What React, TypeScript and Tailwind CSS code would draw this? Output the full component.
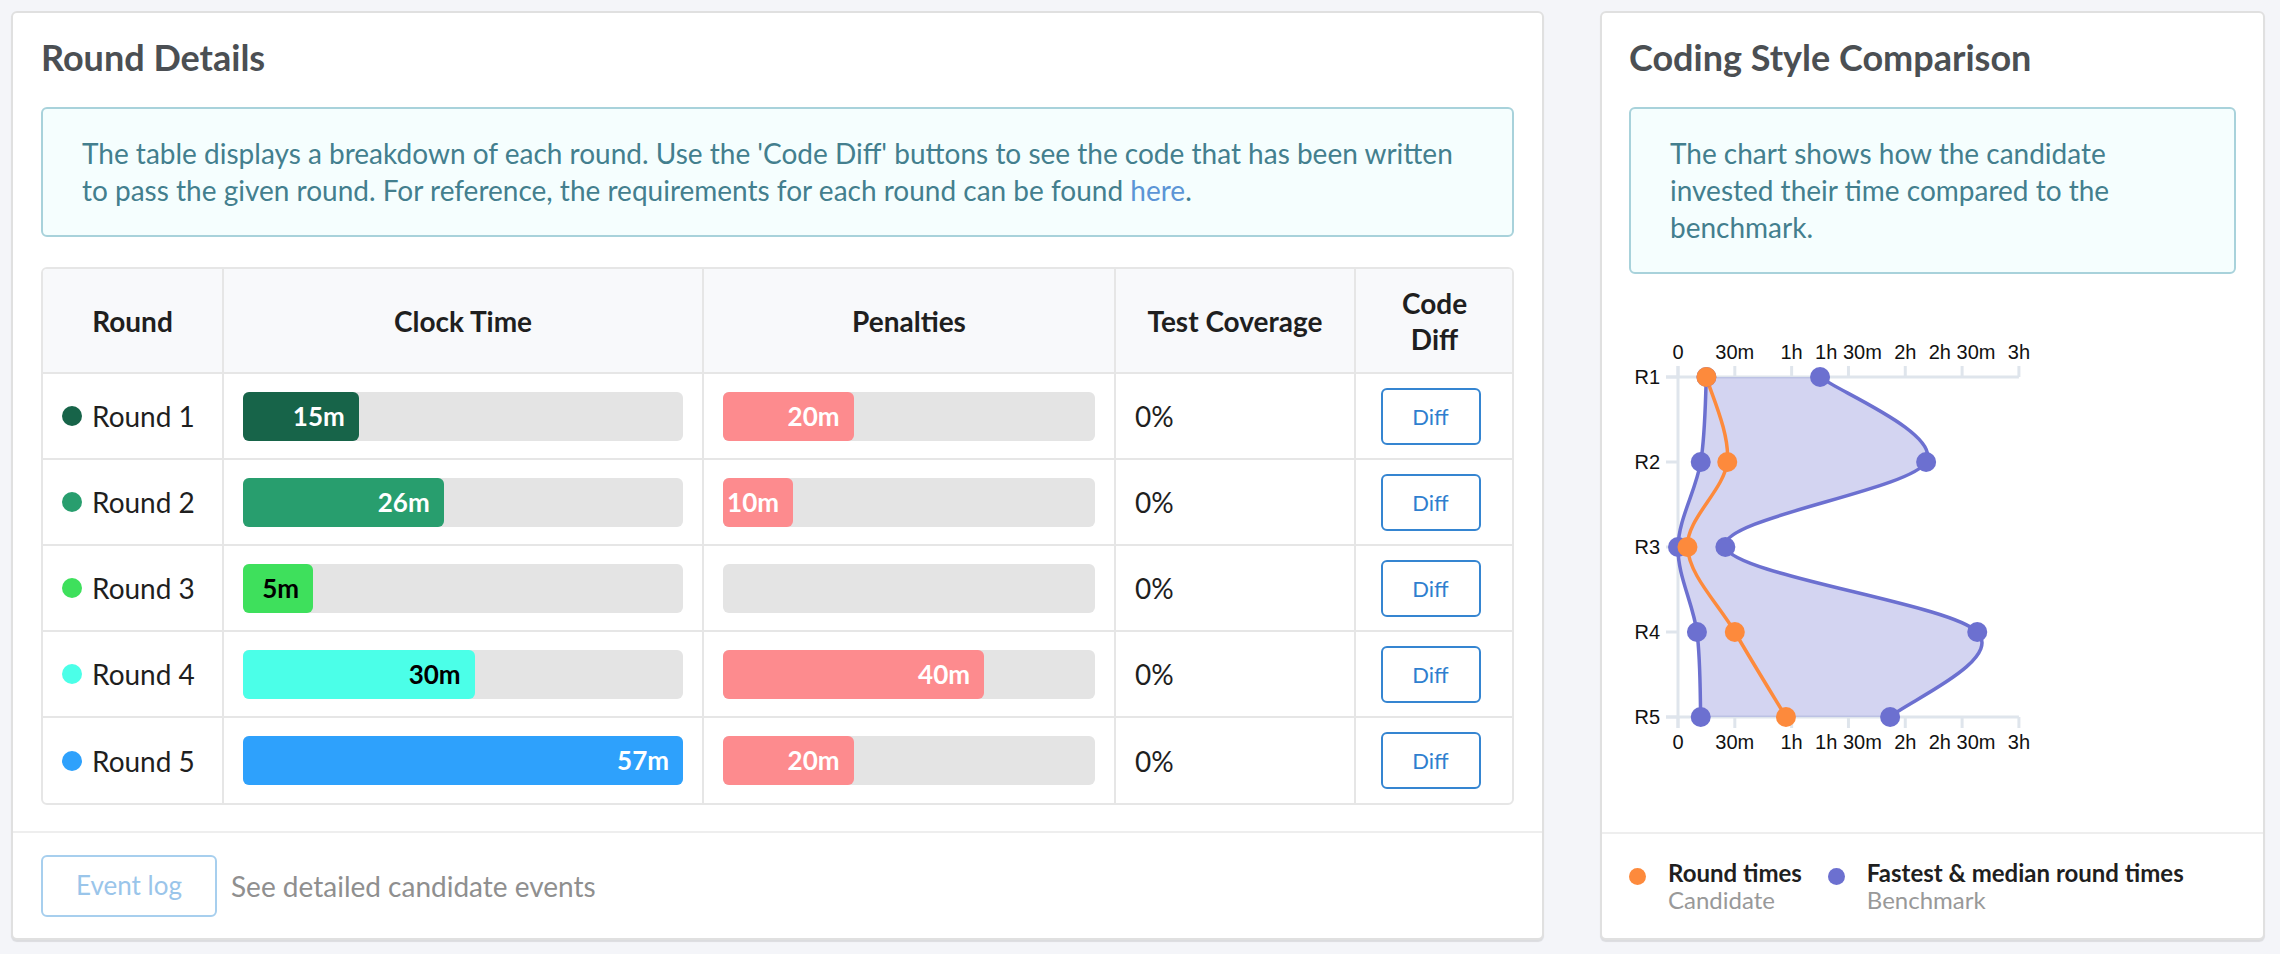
import React from "react";

const rounds = [
  { name: "Round 1", dot: "bg-[#176449]", fill: "bg-[#176449]", text: "text-white", clock: 15, penalty: 20 },
  { name: "Round 2", dot: "bg-[#289e6e]", fill: "bg-[#289e6e]", text: "text-white", clock: 26, penalty: 10 },
  { name: "Round 3", dot: "bg-[#3ee05c]", fill: "bg-[#3ee05c]", text: "text-black", clock: 5, penalty: 0 },
  { name: "Round 4", dot: "bg-[#4bffe8]", fill: "bg-[#4bffe8]", text: "text-black", clock: 30, penalty: 40 },
  { name: "Round 5", dot: "bg-[#2ea1fc]", fill: "bg-[#2ea1fc]", text: "text-white", clock: 57, penalty: 20 },
];

const MAX = 57;

// chart data, minutes per round
const fastest = [15, 12, 0, 10, 12];
const median = [75, 131, 25, 158, 112];
const candidate = [15, 26, 5, 30, 57];

const X0 = 49;
const PX = 1.894;
const ROW_Y = [48, 133, 218, 303, 388];
const ticks = [
  { m: 0, label: "0" },
  { m: 30, label: "30m" },
  { m: 60, label: "1h" },
  { m: 90, label: "1h 30m" },
  { m: 120, label: "2h" },
  { m: 150, label: "2h 30m" },
  { m: 180, label: "3h" },
];

const xm = (m: number) => X0 + m * PX;

type Pt = [number, number];

function spline(pts: Pt[], move = true) {
  let d = move ? `M${pts[0][0]},${pts[0][1]}` : `L${pts[0][0]},${pts[0][1]}`;
  for (let i = 0; i < pts.length - 1; i++) {
    const p0 = pts[i - 1] || pts[i];
    const p1 = pts[i];
    const p2 = pts[i + 1];
    const p3 = pts[i + 2] || pts[i + 1];
    const c1x = p1[0] + (p2[0] - p0[0]) / 6;
    const c1y = p1[1] + (p2[1] - p0[1]) / 6;
    const c2x = p2[0] - (p3[0] - p1[0]) / 6;
    const c2y = p2[1] - (p3[1] - p1[1]) / 6;
    d += ` C${c1x},${c1y} ${c2x},${c2y} ${p2[0]},${p2[1]}`;
  }
  return d;
}

function Bar({ value, fill, text }: { value: number; fill: string; text: string }) {
  return (
    <div className="h-[49px] w-full rounded-[6px] bg-[#e4e4e4]">
      {value > 0 && (
        <div
          className={`flex h-full min-w-[70px] items-center justify-end rounded-[6px] pr-[14px] text-[26px] font-bold ${fill} ${text}`}
          style={{ width: `${(value / MAX) * 100}%` }}
        >
          {value}m
        </div>
      )}
    </div>
  );
}

function Chart() {
  const fastPts: Pt[] = fastest.map((m, i) => [xm(m), ROW_Y[i]]);
  const medPts: Pt[] = median.map((m, i) => [xm(m), ROW_Y[i]]);
  const candPts: Pt[] = candidate.map((m, i) => [xm(m), ROW_Y[i]]);
  const area = spline(fastPts) + " " + spline([...medPts].reverse(), false) + " Z";
  const axis = "#dfe5ec";

  return (
    <svg width="608" height="430" className="mt-[55px] block font-['Liberation_Sans',Arial,sans-serif]">
      {/* axes */}
      <line x1={X0} y1={37} x2={X0} y2={399} stroke={axis} strokeWidth={3} />
      <line x1={37} y1={ROW_Y[0]} x2={xm(180)} y2={ROW_Y[0]} stroke={axis} strokeWidth={3} />
      <line x1={37} y1={ROW_Y[4]} x2={xm(180)} y2={ROW_Y[4]} stroke={axis} strokeWidth={3} />
      {ROW_Y.map((y) => (
        <line key={y} x1={37} y1={y} x2={X0} y2={y} stroke={axis} strokeWidth={3} />
      ))}
      {ticks.map((t) => (
        <g key={t.m}>
          <line x1={xm(t.m)} y1={37} x2={xm(t.m)} y2={ROW_Y[0]} stroke={axis} strokeWidth={3} />
          <line x1={xm(t.m)} y1={ROW_Y[4]} x2={xm(t.m)} y2={399} stroke={axis} strokeWidth={3} />
          <text x={xm(t.m)} y={30} textAnchor="middle" fontSize={20} fill="#111111">
            {t.label}
          </text>
          <text x={xm(t.m)} y={420} textAnchor="middle" fontSize={20} fill="#111111">
            {t.label}
          </text>
        </g>
      ))}
      {ROW_Y.map((y, i) => (
        <text key={i} x={31} y={y + 7} textAnchor="end" fontSize={20} fill="#111111">
          R{i + 1}
        </text>
      ))}

      {/* benchmark band */}
      <path d={area} fill="#6c70d0" fillOpacity={0.3} />
      <path d={spline(fastPts)} fill="none" stroke="#6c70d0" strokeWidth={3.5} />
      <path d={spline(medPts)} fill="none" stroke="#6c70d0" strokeWidth={3.5} />
      <path d={spline(candPts)} fill="none" stroke="#fd8a3c" strokeWidth={3.5} />

      {[...fastPts, ...medPts].map((p, i) => (
        <circle key={"b" + i} cx={p[0]} cy={p[1]} r={10} fill="#6c70d0" />
      ))}
      {candPts.map((p, i) => (
        <circle key={"c" + i} cx={p[0]} cy={p[1]} r={10} fill="#fd8a3c" />
      ))}
    </svg>
  );
}

export default function App() {
  return (
    <div className="flex h-[954px] w-[2280px] gap-[56px] bg-[#f4f5f9] pb-[14px] pl-[11px] pr-[15px] pt-[11px] font-['Lato',sans-serif]">
      {/* Round details */}
      <div className="flex w-[1533px] flex-col rounded-[6px] border-2 border-[#e0e0e0] bg-white shadow-[0_2px_1px_rgba(0,0,0,0.1)]">
        <div className="flex-1 px-[28px] pt-[24px]">
          <h2 className="text-[36px] font-bold leading-[40px] text-[#4b4f53]">Round Details</h2>
          <div className="mt-[30px] rounded-[6px] border-2 border-[#a8d2db] bg-[#f5fefe] px-[39px] py-[26px] text-[28px] leading-[37px] text-[#437f8e]">
            The table displays a breakdown of each round. Use the 'Code Diff' buttons to see the code that has been written
            <br />
            to pass the given round. For reference, the requirements for each round can be found{" "}
            <span className="text-[#5b95d6]">here</span>.
          </div>

          <div className="mt-[30px] overflow-hidden rounded-[6px] border-2 border-[#e6e6e6]">
            <table className="w-full table-fixed border-collapse">
              <colgroup>
                <col className="w-[180px]" />
                <col className="w-[480px]" />
                <col className="w-[412px]" />
                <col className="w-[240px]" />
                <col className="w-[158px]" />
              </colgroup>
              <thead>
                <tr className="h-[104px] bg-[#f8f9fb] text-[28px] font-bold leading-[36px] text-[#1f1f1f]">
                  <th className="border-b-2 border-[#e6e6e6] font-bold">Round</th>
                  <th className="border-b-2 border-l-2 border-[#e6e6e6] font-bold">Clock Time</th>
                  <th className="border-b-2 border-l-2 border-[#e6e6e6] font-bold">Penalties</th>
                  <th className="border-b-2 border-l-2 border-[#e6e6e6] font-bold">Test Coverage</th>
                  <th className="border-b-2 border-l-2 border-[#e6e6e6] px-[36px] font-bold">Code Diff</th>
                </tr>
              </thead>
              <tbody>
                {rounds.map((r, i) => (
                  <tr
                    key={r.name}
                    className={`h-[86px] text-[28px] text-[#1f1f1f] ${i < rounds.length - 1 ? "border-b-2 border-[#e6e6e6]" : ""}`}
                  >
                    <td className="pl-[19px]">
                      <div className="flex items-center gap-[10px]">
                        <span className={`h-[20px] w-[20px] rounded-full ${r.dot}`} />
                        <span>{r.name}</span>
                      </div>
                    </td>
                    <td className="border-l-2 border-[#e6e6e6] px-[19px]">
                      <Bar value={r.clock} fill={r.fill} text={r.text} />
                    </td>
                    <td className="border-l-2 border-[#e6e6e6] px-[19px]">
                      <Bar value={r.penalty} fill="bg-[#fd8b8e]" text="text-white" />
                    </td>
                    <td className="border-l-2 border-[#e6e6e6] pl-[19px]">0%</td>
                    <td className="border-l-2 border-[#e6e6e6] pr-[8px]">
                      <div className="flex justify-center">
                        <button className="h-[57px] w-[100px] rounded-[6px] border-2 border-[#3585d1] text-[22px] text-[#2f7fcf]">
                          Diff
                        </button>
                      </div>
                    </td>
                  </tr>
                ))}
              </tbody>
            </table>
          </div>
        </div>
        <div className="flex h-[107px] items-center gap-[14px] border-t-2 border-[#eeeeee] px-[28px]">
          <button className="h-[62px] w-[176px] rounded-[6px] border-2 border-[#a7cfee] text-[26px] text-[#9ac5ea]">
            Event log
          </button>
          <span className="text-[28px] text-[#8f8f8f]">See detailed candidate events</span>
        </div>
      </div>

      {/* Coding style comparison */}
      <div className="flex w-[665px] flex-col rounded-[6px] border-2 border-[#e0e0e0] bg-white shadow-[0_2px_1px_rgba(0,0,0,0.1)]">
        <div className="flex-1 px-[27px] pt-[24px]">
          <h2 className="text-[36px] font-bold leading-[40px] text-[#4b4f53]">Coding Style Comparison</h2>
          <div className="mt-[30px] rounded-[6px] border-2 border-[#a8d2db] bg-[#f5fefe] px-[39px] py-[26px] text-[28px] leading-[37px] text-[#437f8e]">
            The chart shows how the candidate
            <br />
            invested their time compared to the
            <br />
            benchmark.
          </div>
          <Chart />
        </div>
        <div className="flex h-[106px] items-center gap-[26px] border-t-2 border-[#eeeeee] px-[27px] text-[24px] leading-[27px]">
          <div className="flex items-start gap-[22px]">
            <span className="mt-[9px] h-[17px] w-[17px] rounded-full bg-[#fd8a3c]" />
            <div>
              <div className="font-bold text-[#1f1f1f]">Round times</div>
              <div className="text-[#999999]">Candidate</div>
            </div>
          </div>
          <div className="flex items-start gap-[22px]">
            <span className="mt-[9px] h-[17px] w-[17px] rounded-full bg-[#6c70d0]" />
            <div>
              <div className="font-bold text-[#1f1f1f]">Fastest &amp; median round times</div>
              <div className="text-[#999999]">Benchmark</div>
            </div>
          </div>
        </div>
      </div>
    </div>
  );
}
